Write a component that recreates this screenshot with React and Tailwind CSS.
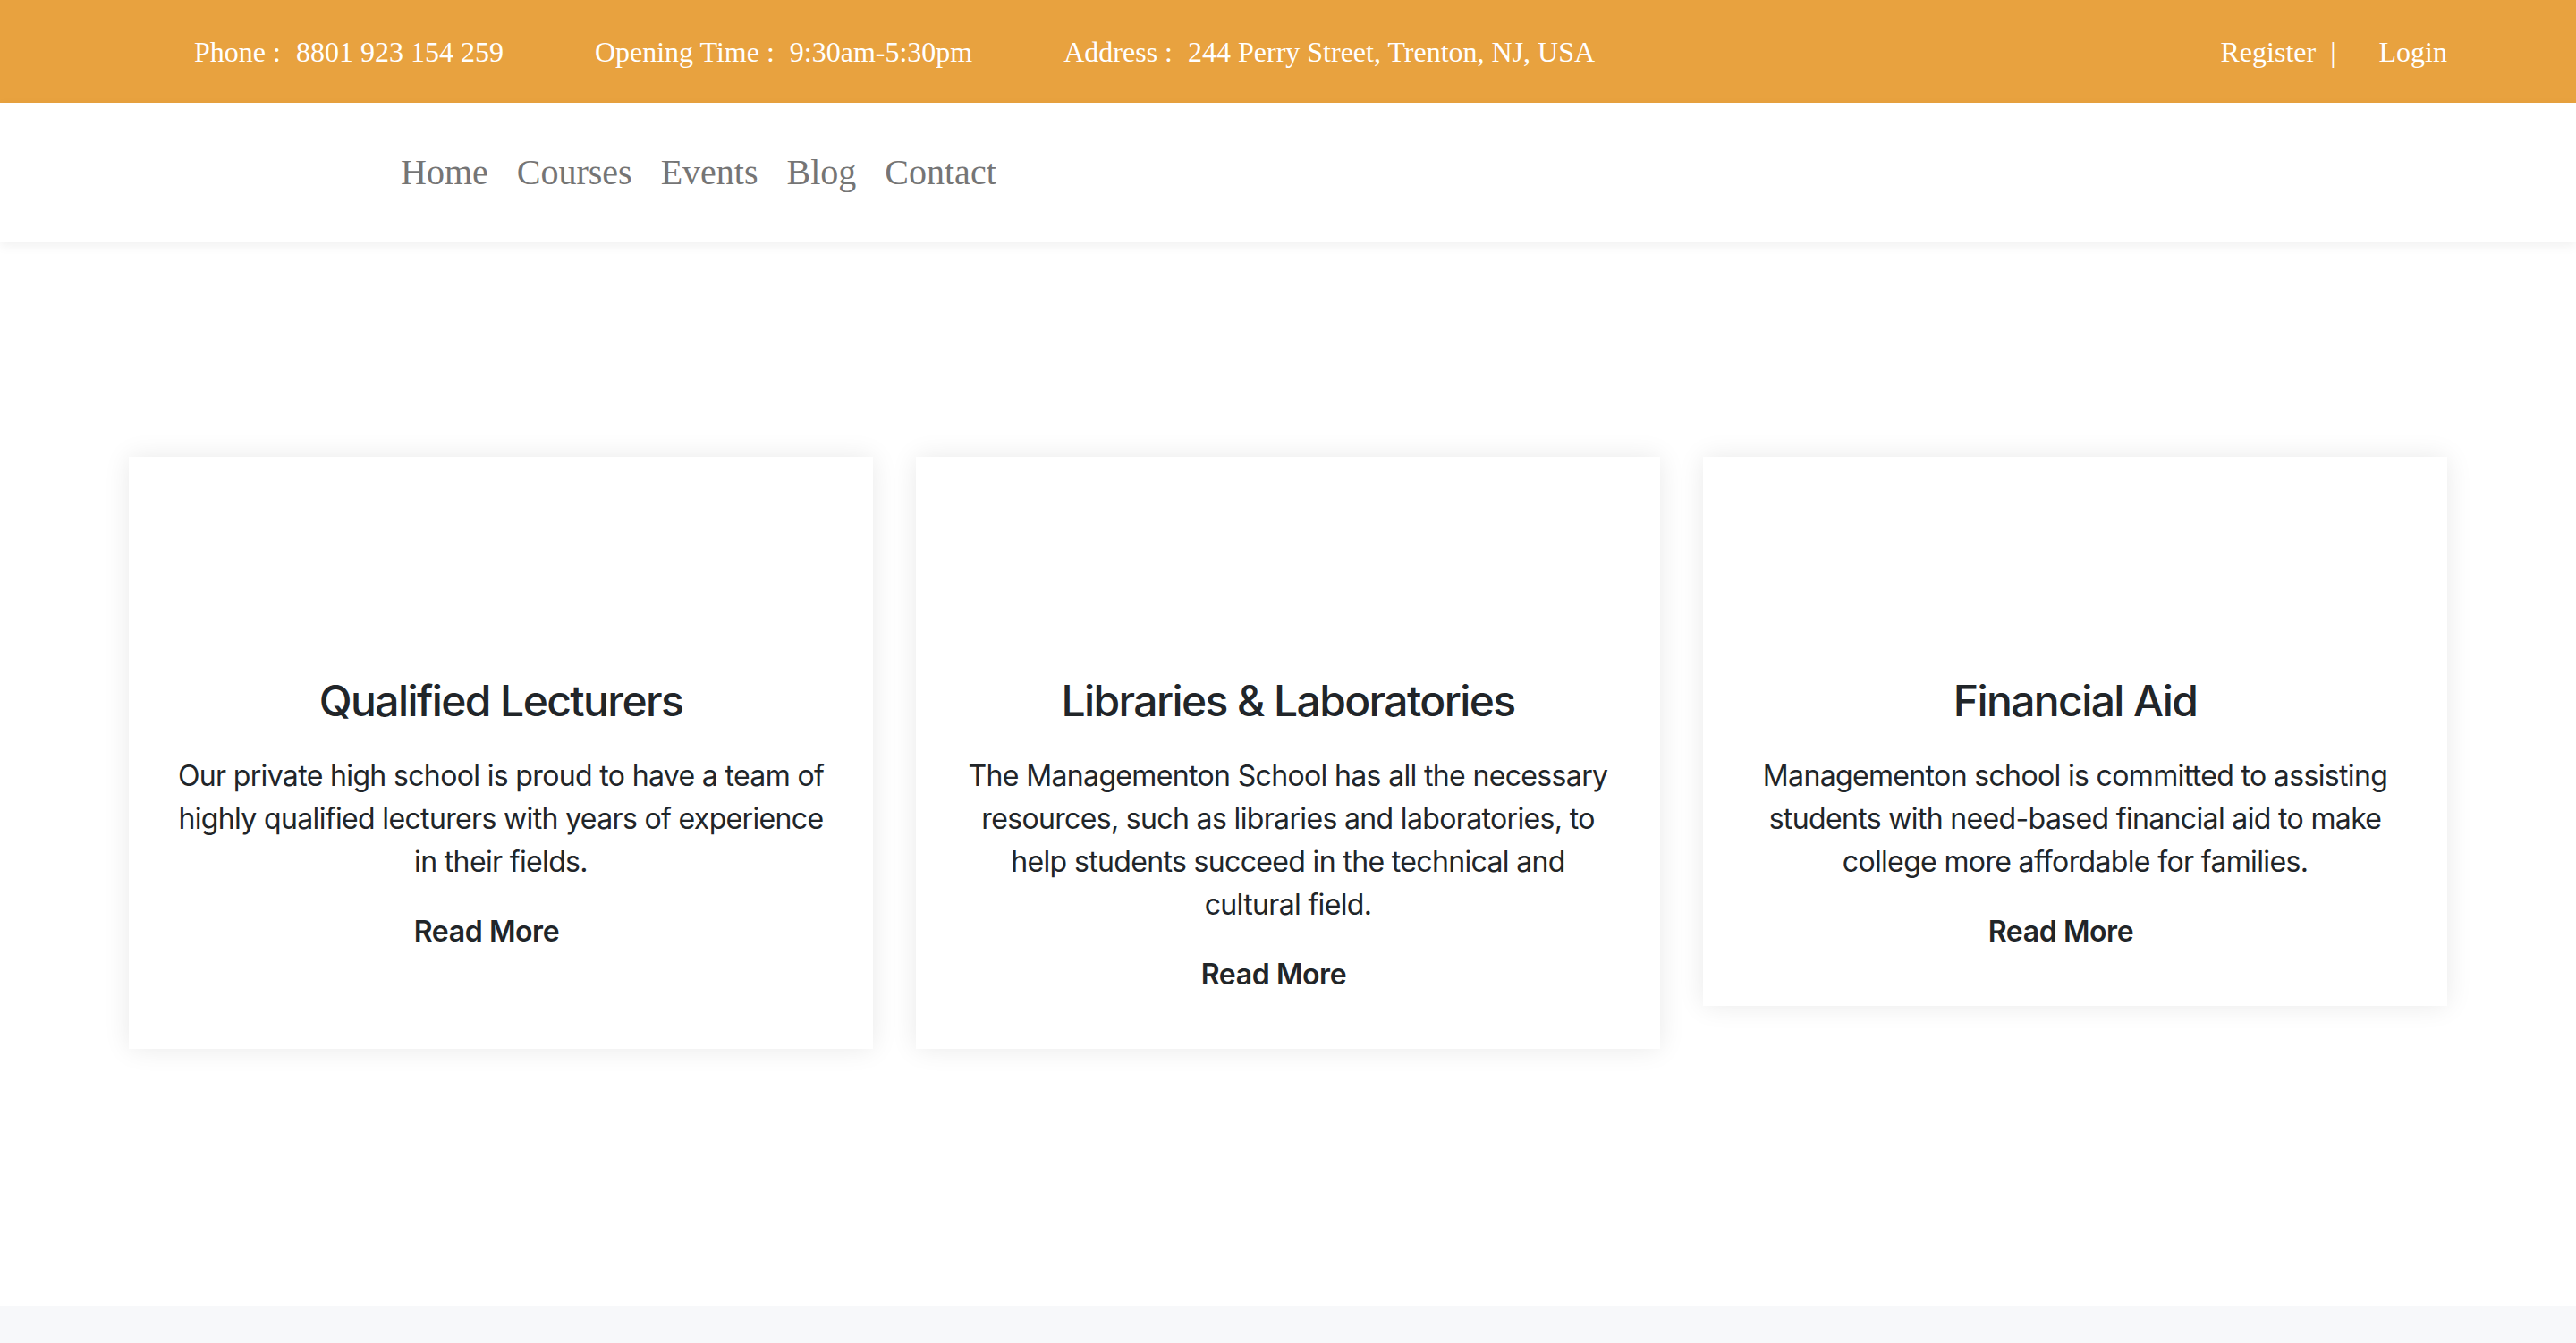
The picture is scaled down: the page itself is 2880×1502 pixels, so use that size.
const cards = [
  {
    title: 'Qualified Lecturers',
    text: 'Our private high school is proud to have a team of highly qualified lecturers with years of experience in their fields.',
  },
  {
    title: 'Libraries & Laboratories',
    text: 'The Managementon School has all the necessary resources, such as libraries and laboratories, to help students succeed in the technical and cultural field.',
  },
  {
    title: 'Financial Aid',
    text: 'Managementon school is committed to assisting students with need-based financial aid to make college more affordable for families.',
    short: true,
  },
];

function TopBar() {
  return (
    <div className="h-[115px] bg-[#E8A23F] flex items-center px-[144px] text-white text-[32px] font-['Liberation_Serif',serif]">
      <ul className="flex gap-[102px] pl-[73px]">
        <li>Phone :<span className="ml-[17px]">8801 923 154 259</span></li>
        <li>Opening Time :<span className="ml-[17px]">9:30am-5:30pm</span></li>
        <li>Address :<span className="ml-[17px]">244 Perry Street, Trenton, NJ, USA</span></li>
      </ul>
      <div className="ml-auto flex items-center">
        <a href="#">Register</a>
        <span className="ml-[16px]">|</span>
        <a href="#" className="ml-[48px]">Login</a>
      </div>
    </div>
  );
}

function NavBar() {
  return (
    <nav className="relative z-10 h-[156px] bg-white shadow-[0_4px_12px_rgba(0,0,0,0.06)] flex items-center pl-[448px]">
      <ul className="flex gap-[32px] text-[40px] text-[#757575] font-['Liberation_Serif',serif]">
        <li>Home</li>
        <li>Courses</li>
        <li>Events</li>
        <li>Blog</li>
        <li>Contact</li>
      </ul>
    </nav>
  );
}

function Card({ title, text, short }) {
  return (
    <div className={`bg-white shadow-[0_0_28px_rgba(0,0,0,0.09)] text-center text-[#212529] pt-[244px] px-[50px] pb-[59px] ${short ? 'self-start' : ''}`}>
      <h3 className="text-[48px] leading-[58px] font-medium tracking-[-1.6px] mb-[31px]">{title}</h3>
      <p className="text-[32px] leading-[48px] tracking-[-0.65px] mb-[30px]">{text}</p>
      <a href="#" className="inline-block mr-8 text-[32px] leading-[48px] font-semibold tracking-[-0.4px]">Read More</a>
    </div>
  );
}

export default function App() {
  return (
    <div className="min-h-screen bg-white font-['Inter',sans-serif]">
      <TopBar />
      <NavBar />
      <section className="pt-[240px] pb-[288px] px-[144px]">
        <div className="grid grid-cols-3 gap-[48px]">
          {cards.map((c) => (
            <Card key={c.title} {...c} />
          ))}
        </div>
      </section>
      <footer className="h-[200px] bg-[#F7F8FA]" />
    </div>
  );
}
